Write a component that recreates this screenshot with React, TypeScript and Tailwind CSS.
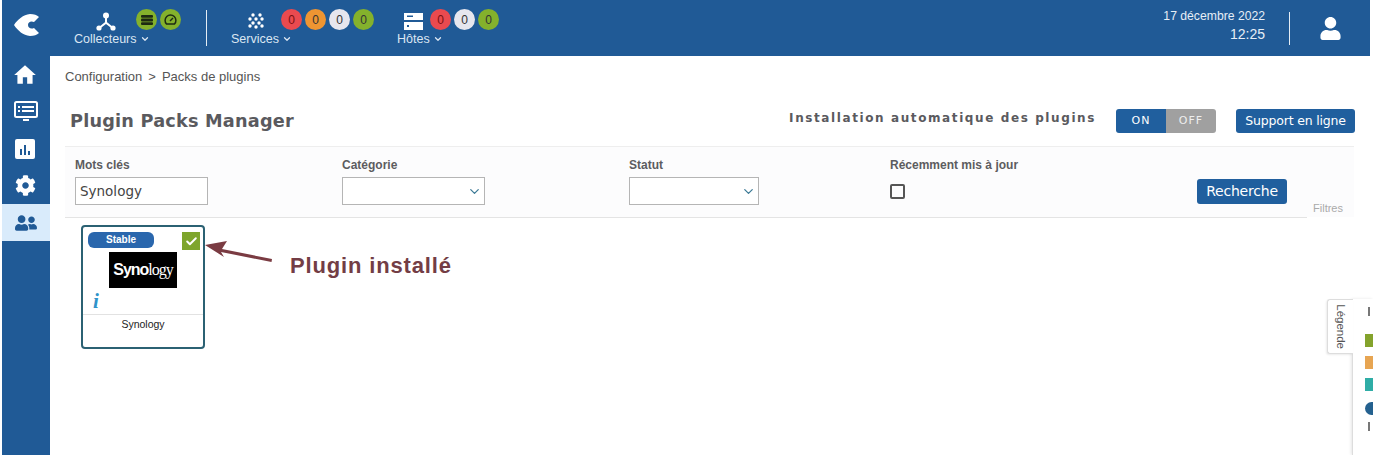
import { Check, ChevronDown } from "lucide-react";
import { FaCog, FaUserFriends, FaUser } from "react-icons/fa";
import { MdHome } from "react-icons/md";

function Dot({ color, dark, children }: { color: string; dark?: boolean; children?: React.ReactNode }) {
  return (
    <span className={`w-[21px] h-[21px] rounded-full flex items-center justify-center text-[12px] leading-none ${color} ${dark ? "text-[#7a1010]" : "text-[#333]"}`}>
      {children}
    </span>
  );
}

function NavLabel({ label }: { label: string }) {
  return (
    <span className="flex items-center gap-[3px] text-[12.5px] leading-[14px] text-[#dbe6f2]">
      {label}
      <ChevronDown size={10} strokeWidth={3} />
    </span>
  );
}

function Select({ width }: { width: string }) {
  return (
    <div className={`h-[28px] border border-[#b5b5b5] bg-white flex items-center justify-end pr-[2px] ${width}`}>
      <ChevronDown size={15} className="text-[#3c7a96]" strokeWidth={2} />
    </div>
  );
}

function Label({ children }: { children: React.ReactNode }) {
  return <div className="text-[12px] leading-[14px] font-bold text-[#5c5c60]">{children}</div>;
}

export default function App() {
  return (
    <div className="relative w-[1373px] h-[455px] overflow-hidden bg-white pl-[2px] font-['Liberation_Sans',sans-serif]">
      <header className="h-[56px] w-[1368px] bg-[#205a96] flex text-white">
        <div className="w-[48px] pt-[14px] pl-[12px]">
          <svg width="26" height="22" viewBox="0 0 26 22">
            <path d="M0 11 C4 5 9 1 16 0 C20 0 23 1 25 3 L20 8 C17 6.5 14 8 14 11 C14 14 17 15.5 20 14 L25 19 C23 21 20 22 16 22 C9 21 4 17 0 11 Z" fill="#fff" />
          </svg>
        </div>
        <div className="w-[109px] ml-[24px] pt-[12px] relative">
          <svg className="ml-[22px]" width="20" height="19" viewBox="0 0 20 19" fill="#fff">
            <circle cx="10" cy="3.5" r="3" />
            <rect x="9" y="5" width="2" height="6" />
            <path d="M9.2 10 L3 15 L4 16.5 L10 12 L16 16.5 L17 15 L10.8 10 Z" />
            <circle cx="3" cy="16" r="2.6" />
            <circle cx="17" cy="16" r="2.6" />
          </svg>
          <div className="mt-[1px]"><NavLabel label="Collecteurs" /></div>
          <div className="absolute top-[9px] left-[62px] flex gap-[3px]">
            <span className="w-[21px] h-[21px] rounded-full bg-[#84b12c] flex items-center justify-center">
              <svg width="12" height="10" viewBox="0 0 12 10" fill="#1d2a12">
                <rect x="0" y="0" width="12" height="2.8" rx="1" />
                <rect x="0" y="3.6" width="12" height="2.8" rx="1" />
                <rect x="0" y="7.2" width="12" height="2.8" rx="1" />
              </svg>
            </span>
            <span className="w-[21px] h-[21px] rounded-full bg-[#84b12c] flex items-center justify-center">
              <svg width="13" height="11" viewBox="0 0 13 11" fill="none" stroke="#1d2a12" strokeWidth="1.5">
                <path d="M2.5 10 A5.4 5.4 0 1 1 10.5 10 Z" />
                <path d="M6 7 L9 4" />
              </svg>
            </span>
          </div>
        </div>
        <div className="w-px h-[36px] bg-[#e4edf5] mt-[10px] ml-[23px]" />
        <div className="ml-[24px] w-[166px] flex items-start">
          <div className="flex flex-col items-start w-[61px] pt-[12px]">
            <svg className="ml-[17px]" width="16" height="19" viewBox="0 0 16 19" fill="#fff">
              {[[5, 3], [12, 3], [2, 7], [8, 7], [14, 7], [5, 11], [11, 11], [2, 14], [8, 15], [14, 14]].map(([x, y]) => (
                <circle key={`${x}-${y}`} cx={x} cy={y} r="1.7" />
              ))}
            </svg>
            <div className="mt-[1px]"><NavLabel label="Services" /></div>
          </div>
          <div className="flex gap-[3px] -ml-[11px] mt-[9px]">
            <Dot color="bg-[#ea4a4f]" dark>0</Dot>
            <Dot color="bg-[#ee9532]">0</Dot>
            <Dot color="bg-[#e6e6ee]">0</Dot>
            <Dot color="bg-[#84b12c]">0</Dot>
          </div>
        </div>
        <div className="flex items-start">
          <div className="flex flex-col items-start w-[44px] pt-[12px]">
            <svg className="ml-[7px]" width="19" height="18" viewBox="0 0 19 18" fill="#fff">
              <path d="M0 1h19v7H0zM3 3.5h6v1.5H3z" fillRule="evenodd" />
              <path d="M0 10h19v8H0zM3 13h2v2H3z" fillRule="evenodd" />
            </svg>
            <div className="mt-[2px]"><NavLabel label="Hôtes" /></div>
          </div>
          <div className="flex gap-[3px] -ml-[11px] mt-[9px]">
            <Dot color="bg-[#ea4a4f]" dark>0</Dot>
            <Dot color="bg-[#e6e6ee]">0</Dot>
            <Dot color="bg-[#84b12c]">0</Dot>
          </div>
        </div>
        <div className="ml-auto flex">
          <div className="text-right text-[#e6eef6] pt-[9px]">
            <div className="text-[12.2px] leading-[14px]">17 décembre 2022</div>
            <div className="text-[14px] leading-[15px] mt-[4px]">12:25</div>
          </div>
          <div className="w-px h-[33px] bg-[#e4edf5] mt-[12px] ml-[24px]" />
          <div className="w-[80px] flex items-center justify-center">
            <FaUser size={23} />
          </div>
        </div>
      </header>

      <div className="flex h-[399px]">
        <nav className="w-[48px] bg-[#205a96] flex flex-col text-white pt-[6px] items-center">
          <div className="h-[39px] -ml-[2px]"><MdHome size={26} /></div>
          <div className="h-[38px]">
            <svg width="24" height="22" viewBox="0 0 24 22">
              <rect x="1" y="1" width="22" height="15" rx="1.5" fill="none" stroke="#fff" strokeWidth="2" />
              <path d="M4 5h2v2H4zM8 5h12v2H8zM4 9h2v2H4zM8 9h12v2H8z" fill="#fff" />
              <path d="M9 18h6v2H9z" fill="#fff" />
            </svg>
          </div>
          <div className="h-[36px] -ml-[2px]">
            <svg width="20" height="21" viewBox="0 0 20 21">
              <rect width="20" height="20" rx="2" fill="#fff" />
              <path d="M5 10h2v6H5zM9 6h2v10H9zM13 12h2v4h-2z" fill="#205a96" />
            </svg>
          </div>
          <div className="h-[29px] -ml-[2px]"><FaCog size={21} /></div>
          <div className="h-[37px] w-full bg-[#d9ebfb] flex items-center justify-center text-[#205a96]"><FaUserFriends size={22} /></div>
        </nav>

        <main className="flex-1 pl-[15px] pr-[17px]">
          <div className="text-[13px] leading-[14px] text-[#555] pt-[14px] flex">
            <span>Configuration</span>
            <span className="mx-[6px]">&gt;</span>
            <span>Packs de plugins</span>
          </div>
          <div className="flex items-start mt-[20px] h-[42px] pr-[1px]">
            <h1 className="ml-[5px] text-[17.7px] leading-[22px] mt-[6px] font-bold tracking-[0.2px] text-[#5a5a5e] font-['DejaVu_Sans',sans-serif]">Plugin Packs Manager</h1>
            <div className="ml-auto flex items-start mt-[5px]">
              <span className="text-[12px] leading-[14px] mt-[2px] font-bold tracking-[1.6px] text-[#5a5a5e] font-['DejaVu_Sans',sans-serif]">Installation automatique des plugins</span>
              <div className="ml-[20px] flex rounded-[3px] overflow-hidden h-[24px] w-[100px] text-[11px] tracking-[1px] font-['DejaVu_Sans',sans-serif]">
                <span className="w-[50px] bg-[#205f9e] text-white flex items-center justify-center">ON</span>
                <span className="w-[50px] bg-[#a0a0a0] text-[#eee] flex items-center justify-center">OFF</span>
              </div>
              <button className="ml-[20px] h-[24px] w-[119px] rounded-[3px] bg-[#205f9e] text-white text-[12.5px] font-['DejaVu_Sans',sans-serif] tracking-[-0.2px]">Support en ligne</button>
            </div>
          </div>
          <div className="border-t border-[#eee] bg-[#fcfcfd] h-[71px] relative flex pl-[10px] pt-[11px] mr-[2px]">
            <div className="w-[267px]">
              <Label>Mots clés</Label>
              <div className="mt-[5px] w-[133px] h-[28px] border border-[#b5b5b5] bg-white pl-[4px] text-[13.5px] leading-[26px] text-[#444] font-['DejaVu_Sans',sans-serif]">Synology</div>
            </div>
            <div className="w-[287px]">
              <Label>Catégorie</Label>
              <div className="mt-[5px]"><Select width="w-[143px]" /></div>
            </div>
            <div className="w-[261px]">
              <Label>Statut</Label>
              <div className="mt-[5px]"><Select width="w-[130px]" /></div>
            </div>
            <div className="w-[307px]">
              <Label>Récemment mis à jour</Label>
              <div className="mt-[12px] w-[15px] h-[15px] rounded-[2px] border-2 border-[#555]" />
            </div>
            <button className="mt-[21px] h-[25px] w-[90px] rounded-[3px] bg-[#205f9e] text-white text-[14px] font-['DejaVu_Sans',sans-serif] tracking-[-0.2px]">Recherche</button>
            <span className="absolute right-[11px] top-[55px] text-[11px] leading-[12px] text-[#aaa]">Filtres</span>
          </div>
          <div className="border-t border-[#e4e4e4] w-[1242px] pt-[7px] pl-[16px] flex items-start">
            <div className="w-[124px] h-[124px] border-2 border-[#2b6173] rounded-[4px] flex flex-col bg-white">
              <div className="flex justify-between pl-[5px] pr-[3px] pt-[5px] items-start">
                <span className="w-[66px] h-[16px] rounded-[6px] bg-[#2a67ad] text-white text-[10px] leading-[15px] font-bold text-center">Stable</span>
                <span className="w-[18px] h-[18px] bg-[#7ea52c] flex items-center justify-center text-white"><Check size={13} strokeWidth={3.5} /></span>
              </div>
              <div className="mx-auto mt-[2px] w-[68px] h-[36px] bg-black text-white text-[16px] leading-[36px] text-center tracking-[-1px] font-bold">
                Syno<span className="font-normal font-['Liberation_Serif',serif]">logy</span>
              </div>
              <div className="h-[26px] pl-[10px] pt-[1px] text-[#2f93c9] text-[21px] leading-[24px] font-bold italic font-['Liberation_Serif',serif]">i</div>
              <div className="border-t border-[#e2e2e2] text-center text-[10.5px] leading-[12px] pt-[3px] text-[#222]">Synology</div>
            </div>
            <svg className="-ml-[1px] mt-[15px]" width="72" height="30" viewBox="0 0 72 30">
              <path d="M1 5 L23 1 L18 9 L68 19 L67.5 22 L17 12 L20 17 Z" fill="#7a3b42" />
            </svg>
            <span className="ml-[14px] mt-[29px] text-[22px] leading-[24px] font-bold text-[#733d45] tracking-[0.85px]">Plugin installé</span>
          </div>
        </main>
      </div>

      <div className="absolute left-[1352px] top-[299px] w-[21px] h-[156px] bg-white border-l border-[#ddd] shadow-[-1px_0_3px_rgba(0,0,0,0.1)] flex flex-col items-start">
        <span className="ml-[15px] mt-[8px] w-[2px] h-[9px] bg-[#777]" />
        <span className="ml-[12px] mt-[18px] w-[9px] h-[13px] bg-[#84a32c]" />
        <span className="ml-[12px] mt-[9px] w-[9px] h-[13px] bg-[#e7a552]" />
        <span className="ml-[12px] mt-[9px] w-[9px] h-[13px] bg-[#2fada6]" />
        <span className="ml-[12px] mt-[11px] w-[9px] h-[13px] rounded-l-full bg-[#24618f]" />
        <span className="ml-[15px] mt-[7px] w-[2px] h-[9px] bg-[#777]" />
      </div>
      <div className="absolute left-[1327px] top-[299px] w-[26px] h-[55px] bg-white border border-r-0 border-[#ddd] rounded-l-[3px] flex items-center justify-center shadow-[-1px_1px_2px_rgba(0,0,0,0.08)]">
        <span className="text-[11.5px] text-[#555] rotate-90 whitespace-nowrap">Légende</span>
      </div>
    </div>
  );
}
